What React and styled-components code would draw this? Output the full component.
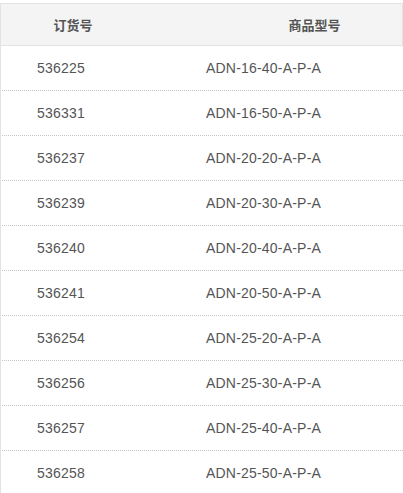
import React from "react";
import styled, { createGlobalStyle } from "styled-components";

const Global = createGlobalStyle`
  html, body { margin: 0; padding: 0; background: #fff; }
  body { overflow: hidden; }
`;

const Table = styled.div`
  margin-top: 3px;
  width: 403px;
  border-left: 1px solid #e3e3e3;
  box-sizing: border-box;
  font-family: "Liberation Sans", Arial, "Noto Sans CJK SC", sans-serif;
`;

const Head = styled.div`
  display: grid;
  grid-template-columns: 144px 1fr;
  height: 41px;
  background: #f4f4f4;
  border-top: 1px solid #e3e3e3;
  border-bottom: 1px solid #e3e3e3;
  border-right: 1px solid #e3e3e3;
`;

const HeadCell = styled.div`
  display: flex;
  align-items: center;
  justify-content: center;
  padding-left: ${(p) => p.$pad || 0}px;
  font-family: "Noto Sans CJK SC", "Liberation Sans", sans-serif;
  font-weight: 700;
  font-size: 13px;
  color: #555;
`;

const Row = styled.div`
  display: grid;
  grid-template-columns: 167px 1fr;
  height: 44px;
  margin-left: 1px;
  border-bottom: 1px dotted #c4c4c4;
`;

const Cell = styled.div`
  display: flex;
  align-items: center;
  padding-left: ${(p) => p.$pad}px;
  font-size: 14px;
  letter-spacing: 0.2px;
  color: #555;
`;

const rows = [
  ["536225", "ADN-16-40-A-P-A"],
  ["536331", "ADN-16-50-A-P-A"],
  ["536237", "ADN-20-20-A-P-A"],
  ["536239", "ADN-20-30-A-P-A"],
  ["536240", "ADN-20-40-A-P-A"],
  ["536241", "ADN-20-50-A-P-A"],
  ["536254", "ADN-25-20-A-P-A"],
  ["536256", "ADN-25-30-A-P-A"],
  ["536257", "ADN-25-40-A-P-A"],
  ["536258", "ADN-25-50-A-P-A"],
];

export default function App() {
  return (
    <>
      <Global />
      <Table>
        <Head>
          <HeadCell>订货号</HeadCell>
          <HeadCell $pad={82}>商品型号</HeadCell>
        </Head>
        {rows.map(([a, b]) => (
          <Row key={a}>
            <Cell $pad={35}>{a}</Cell>
            <Cell $pad={37}>{b}</Cell>
          </Row>
        ))}
      </Table>
    </>
  );
}
